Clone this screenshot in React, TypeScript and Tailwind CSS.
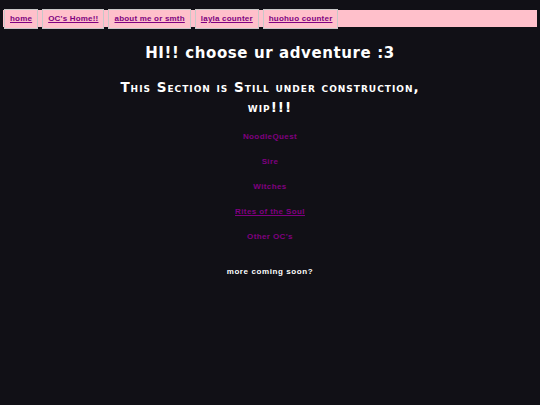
const navLinks = ["home", "OC's Home!!", "about me or smth", "layla counter", "huohuo counter"]

const ocLinks = [
  { label: "NoodleQuest", underline: false },
  { label: "Sire", underline: false },
  { label: "Witches", underline: false },
  { label: "Rites of the Soul", underline: true },
  { label: "Other OC's", underline: false },
]

export default function App() {
  return (
    <div className="min-h-[405px] bg-[#111016] pt-[10px] font-['DejaVu_Sans',sans-serif] text-white">
      {/* Nav */}
      <nav className="mx-[3px] flex h-[17px] items-center gap-[4px] bg-[#ffc0cb] pl-[1px]">
        {navLinks.map((l) => (
          <a
            key={l}
            href="#"
            className="flex h-[20px] items-center border border-[#c8c8c8] bg-[#ffc0cb] px-[5px] font-['Liberation_Sans',sans-serif] text-[8px] font-bold tracking-[0.2px] text-[#800080] underline"
          >
            {l}
          </a>
        ))}
      </nav>

      <main className="flex flex-col items-center text-center">
        <h1 className="mt-[15px] text-[15px] font-bold tracking-[0.6px]">HI!! choose ur adventure :3</h1>
        <h2 className="mt-[12px] w-[330px] text-[13.5px] font-bold leading-[20px] tracking-[1px] [font-variant:small-caps]">
          This Section is Still under construction, wip!!!
        </h2>

        <div className="mt-[14px] flex flex-col items-center gap-[14px] font-['Liberation_Sans',sans-serif]">
          {ocLinks.map((o) => (
            <a
              key={o.label}
              href="#"
              className={`text-[8px] font-bold leading-[11px] tracking-[0.4px] text-[#800080] ${o.underline ? "underline" : "no-underline"}`}
            >
              {o.label}
            </a>
          ))}
        </div>

        <p className="mt-[24px] font-['Liberation_Sans',sans-serif] text-[8px] font-bold tracking-[0.6px]">more coming soon?</p>
      </main>
    </div>
  )
}
